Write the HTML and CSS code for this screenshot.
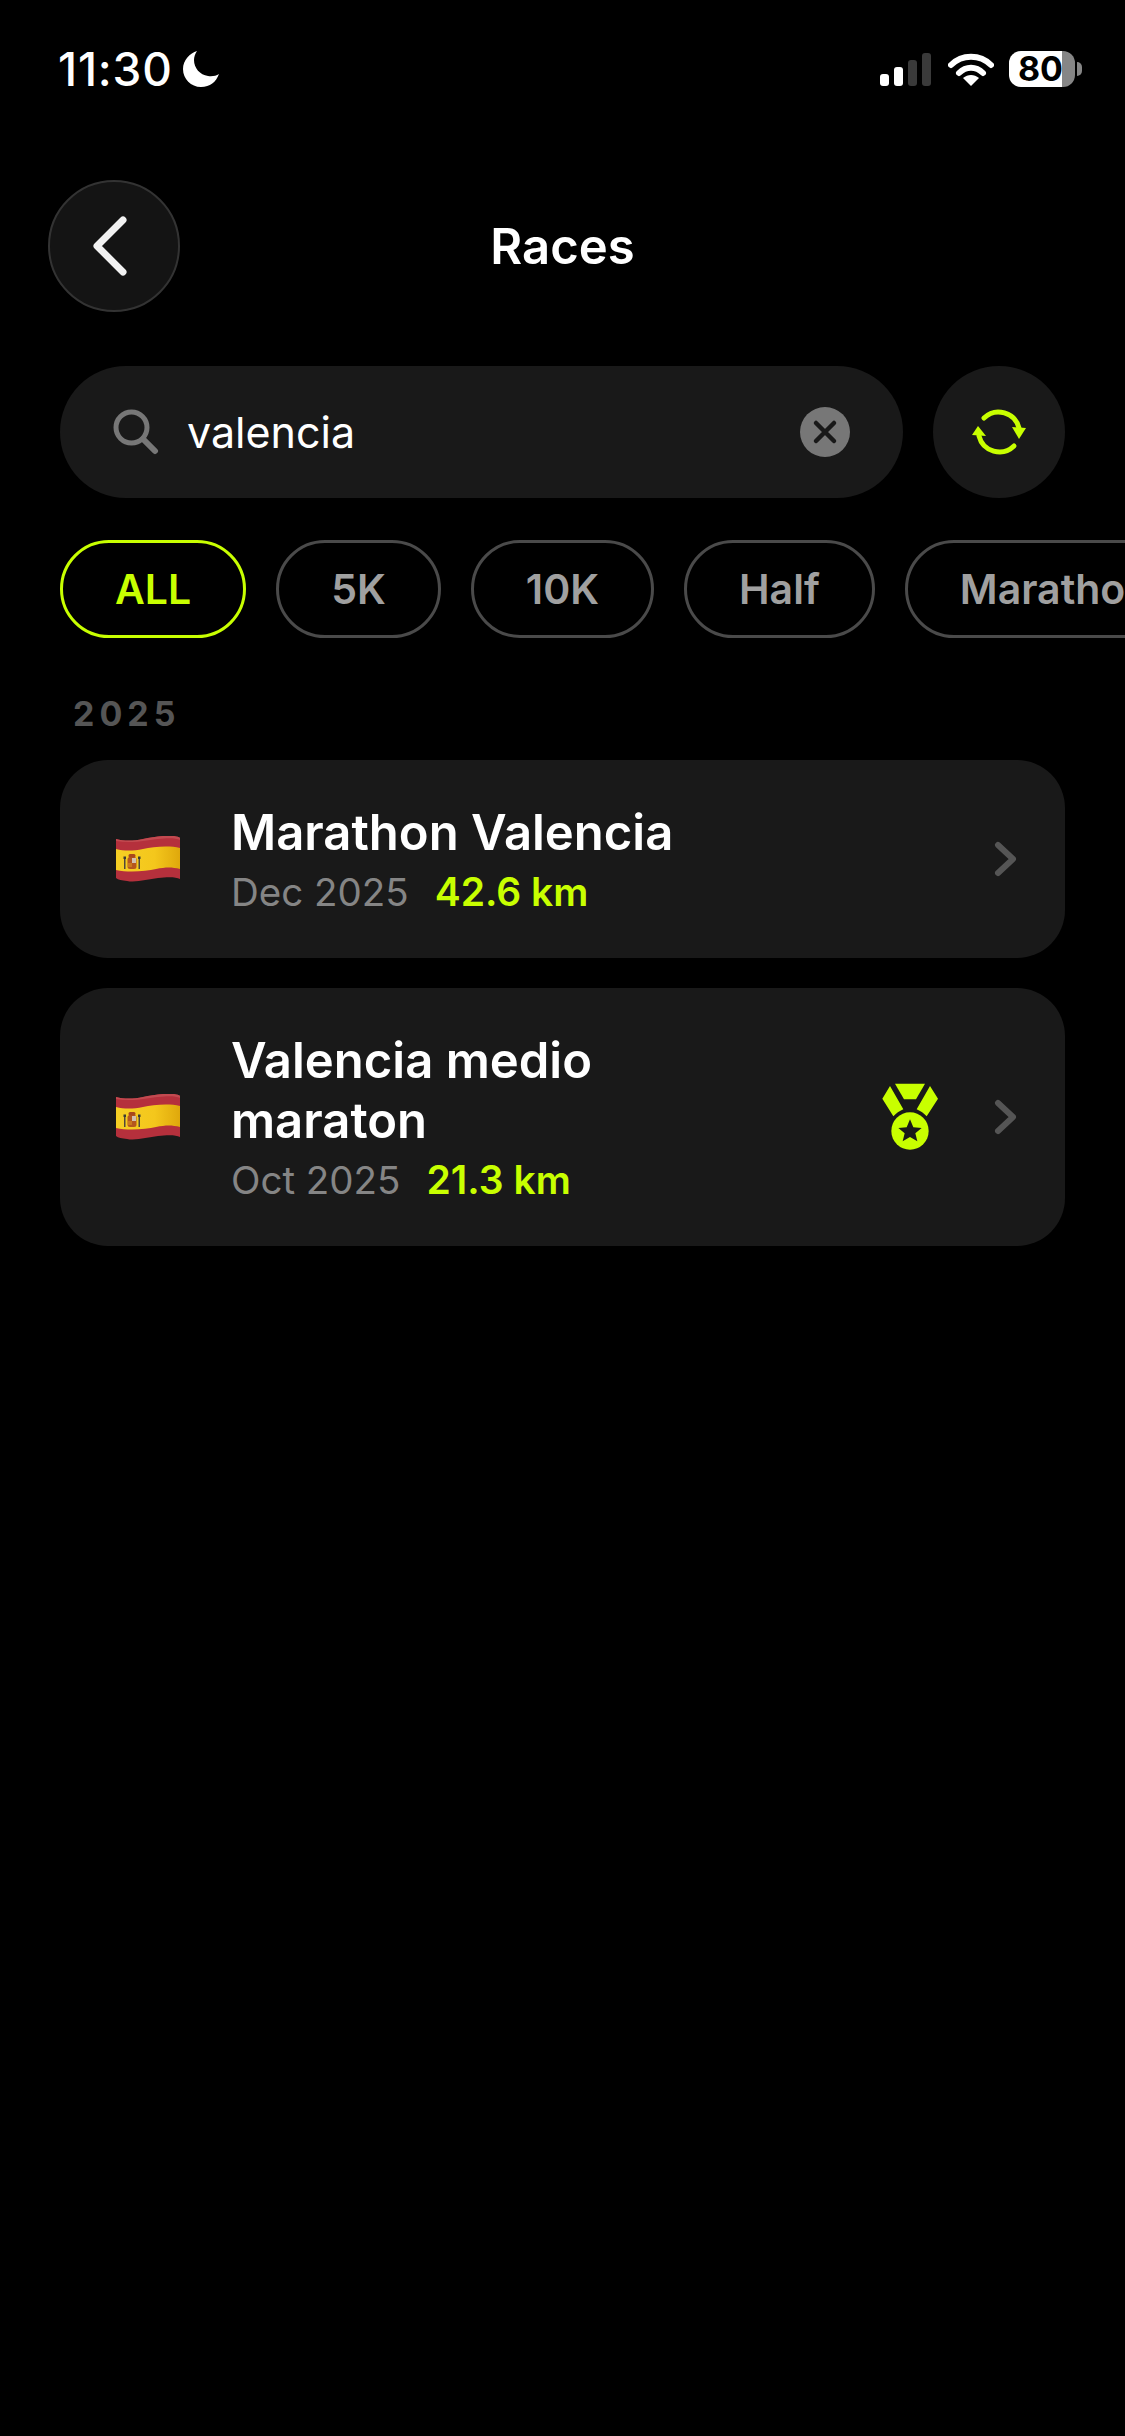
FILE: index.html
```html
<!DOCTYPE html>
<html lang="en">
<head>
    <meta charset="UTF-8">
    <meta name="viewport" content="width=device-width, initial-scale=1.0">
    <title>Races</title>
    <link rel="stylesheet" href="styles.css">
</head>
<body>
    <svg class="defs" width="0" height="0" aria-hidden="true">
        <defs>
            <linearGradient id="flag-shade" x1="0" y1="0" x2="1" y2="0">
                <stop offset="0" stop-color="#f6cf24"/>
                <stop offset="0.6" stop-color="#f4c71c"/>
                <stop offset="1" stop-color="#dfa80c"/>
            </linearGradient>
            <!-- Spanish flag, waving -->
            <symbol id="flag-es" viewBox="0 0 64 46">
                <path fill="#b5303c" d="M0 3C8 5 17 5 27 3S50-1 58 0C61 .5 63 1 64 2V43C60 41 52 41 42 42S20 47 11 45C6 44.500 2 44 0 42Z"/>
                <path fill="#c24a50" d="M0 3C8 5 17 5 27 3S50-1 58 0C61 .5 63 1 64 2V4C60 2 52 2 42 3S16 8 0 5Z"/>
                <path fill="url(#flag-shade)" d="M0 13C8 15 17 15 27 13S52 9 64 12V33C56 31 50 31 40 33S14 37 0 34Z"/>
                <rect x="11.500" y="21" width="9" height="12" rx="2.500" fill="#b5561e"/>
                <rect x="12.500" y="18" width="7" height="3.500" rx="1.500" fill="#a8481c"/>
                <rect x="16" y="22" width="4" height="5" fill="#d0c0b0"/>
                <rect x="12" y="27" width="4" height="4" fill="#c9781e"/>
                <rect x="8" y="22" width="1.500" height="11" fill="#50483c"/>
                <rect x="22.500" y="22" width="1.500" height="11" fill="#50483c"/>
                <rect x="7.500" y="20.500" width="2.500" height="2.500" fill="#3a3a34"/>
                <rect x="22" y="20.500" width="2.500" height="2.500" fill="#3a3a34"/>
            </symbol>
            <symbol id="chevron" viewBox="0 0 24 38">
                <path d="M4 5L19 19L4 33" fill="none" stroke="#555" stroke-width="6" stroke-linecap="round" stroke-linejoin="round"/>
            </symbol>
        </defs>
    </svg>

    <div class="status">
        <div class="status-left">
            <span class="time">11:30</span>
            <svg class="moon" width="36" height="36" viewBox="0 0 36 36">
                <path fill="#fff" d="M14 0C7 2 0 9 0 18C0 28 8 36 18 36C27 36 33 31 36 23C33 25 29 25.500 25 25C17 24 11 17 11 9C11 6 12 3 14 0Z"/>
            </svg>
        </div>
        <div class="status-right">
            <svg width="52" height="33" viewBox="0 0 52 33">
                <rect x="0" y="21" width="9" height="12" rx="3" fill="#fff"/>
                <rect x="14" y="14" width="9" height="19" rx="3" fill="#fff"/>
                <rect x="28" y="7" width="9" height="26" rx="3" fill="#3a3a3a"/>
                <rect x="42" y="0" width="9" height="33" rx="3" fill="#3a3a3a"/>
            </svg>
            <svg class="wifi" width="46" height="33" viewBox="0 0 46 33">
                <path d="M3 12C14 1 32 1 43 12" fill="none" stroke="#fff" stroke-width="6" stroke-linecap="round"/>
                <path d="M11 20C18 13 28 13 35 20" fill="none" stroke="#fff" stroke-width="6" stroke-linecap="round"/>
                <path fill="#fff" d="M15 25C20 21 26 21 31 25L23 33Z"/>
            </svg>
            <div class="battery"><span>80</span></div>
            <div class="battery-nub"></div>
        </div>
    </div>

    <header class="topbar">
        <button class="back" aria-label="Back">
            <svg width="36" height="60" viewBox="0 0 36 60">
                <path d="M31 4L5 30L31 56" fill="none" stroke="#f2f2f2" stroke-width="7" stroke-linecap="round" stroke-linejoin="round"/>
            </svg>
        </button>
        <h1>Races</h1>
    </header>

    <div class="search-row">
        <div class="search">
            <svg class="search-icon" width="46" height="46" viewBox="0 0 46 46">
                <circle cx="18.500" cy="18.500" r="15.500" fill="none" stroke="#777" stroke-width="5"/>
                <path d="M30 30L42 42" stroke="#777" stroke-width="6" stroke-linecap="round"/>
            </svg>
            <span class="search-text">valencia</span>
            <svg class="clear" width="50" height="50" viewBox="0 0 50 50">
                <circle cx="25" cy="25" r="25" fill="#777"/>
                <path d="M16 16L34 34M34 16L16 34" stroke="#191919" stroke-width="4.500" stroke-linecap="round"/>
            </svg>
        </div>
        <button class="refresh" aria-label="Refresh">
            <svg width="60" height="60" viewBox="-30 -30 60 60">
                <path d="M-15 -14A21 21 0 0 1 20 -4" fill="none" stroke="#c8ff00" stroke-width="5" stroke-linecap="round"/>
                <path d="M15 14A21 21 0 0 1 -20 4" fill="none" stroke="#c8ff00" stroke-width="5" stroke-linecap="round"/>
                <path fill="#c8ff00" d="M13 -5L27 -4L20 7Z"/>
                <path fill="#c8ff00" d="M-27 3L-21 -6L-13 4Z"/>
            </svg>
        </button>
    </div>

    <div class="chips">
        <span class="chip active">ALL</span>
        <span class="chip">5K</span>
        <span class="chip">10K</span>
        <span class="chip">Half</span>
        <span class="chip">Marathon</span>
    </div>

    <div class="year">2025</div>

    <div class="races">
        <div class="race">
            <svg class="flag" width="64" height="46"><use href="#flag-es"/></svg>
            <div class="race-info">
                <div class="race-name">Marathon Valencia</div>
                <div class="race-meta">
                    <span class="race-date">Dec 2025</span>
                    <span class="race-km">42.6 km</span>
                </div>
            </div>
            <svg class="chevron" width="24" height="38"><use href="#chevron"/></svg>
        </div>
        <div class="race">
            <svg class="flag" width="64" height="46"><use href="#flag-es"/></svg>
            <div class="race-info">
                <div class="race-name">Valencia medio maraton</div>
                <div class="race-meta">
                    <span class="race-date">Oct 2025</span>
                    <span class="race-km">21.3 km</span>
                </div>
            </div>
            <svg class="medal" width="60" height="70" viewBox="120 100 180 210">
                <path fill="#c8ff00" d="M165 105H255L228 152H192Z"/>
                <path fill="#c8ff00" d="M150 112L190 182C178 187 168 194 160 203L127 150Z"/>
                <path fill="#c8ff00" d="M270 112L230 182C242 187 252 194 260 203L294 150Z"/>
                <circle cx="210" cy="247" r="56" fill="#c8ff00"/>
                <path fill="#191919" d="M210 212L220 236L245 238L226 254L232 278L210 265L188 278L194 254L175 238L200 236Z"/>
            </svg>
            <svg class="chevron" width="24" height="38"><use href="#chevron"/></svg>
        </div>
    </div>
</body>
</html>
```

FILE: styles.css
```css
* {
    box-sizing: border-box;
}
body {
    margin: 0;
    min-height: 2436px;
    background: #000;
    color: #fff;
    font-family: Inter, "Noto Sans", sans-serif;
    overflow-x: hidden;
}
button {
    padding: 0;
    border: none;
    cursor: pointer;
}
.defs {
    display: block;
    height: 0;
}

/* status bar */
.status {
    display: flex;
    justify-content: space-between;
    align-items: center;
    height: 138px;
    padding: 0 43px 0 58px;
}
.status-left {
    display: flex;
    align-items: center;
    gap: 10px;
}
.time {
    font-size: 46px;
    font-weight: 500;
    line-height: 1;
    letter-spacing: 0.8px;
}
.status-right {
    display: flex;
    align-items: center;
}
.wifi {
    margin-left: 16px;
}
.battery {
    display: flex;
    justify-content: flex-end;
    align-items: center;
    width: 66px;
    height: 36px;
    margin-left: 15px;
    padding-right: 12px;
    border-radius: 12px;
    background: linear-gradient(to right, #fff 80%, #868686 80%);
    color: #000;
    font-size: 34px;
    font-weight: 700;
    line-height: 1;
}
.battery-nub {
    width: 5px;
    height: 14px;
    margin-left: 2px;
    border-radius: 0 7px 7px 0;
    background: #868686;
}

/* header */
.topbar {
    display: grid;
    grid-template-columns: 132px 1fr 132px;
    align-items: center;
    margin-top: 42px;
    padding: 0 48px;
}
.back {
    display: flex;
    justify-content: center;
    align-items: center;
    width: 132px;
    height: 132px;
    padding-right: 8px;
    border: 2px solid #333;
    border-radius: 50%;
    background: #141414;
}
.topbar h1 {
    margin: 0;
    font-size: 49px;
    font-weight: 600;
    text-align: center;
}

/* search */
.search-row {
    display: flex;
    gap: 30px;
    margin-top: 54px;
    padding: 0 60px;
}
.search {
    flex: 1;
    display: flex;
    align-items: center;
    height: 132px;
    padding: 0 53px 0 53px;
    border-radius: 66px;
    background: #191919;
}
.search-text {
    flex: 1;
    margin-left: 28px;
    font-size: 43px;
}
.refresh {
    display: flex;
    justify-content: center;
    align-items: center;
    width: 132px;
    height: 132px;
    border-radius: 50%;
    background: #191919;
}

/* filter chips */
.chips {
    display: flex;
    gap: 30px;
    margin-top: 42px;
    padding-left: 60px;
    overflow: hidden;
}
.chip {
    flex-shrink: 0;
    display: flex;
    align-items: center;
    height: 98px;
    padding: 0 52px;
    border: 3px solid #4a4a4a;
    border-radius: 49px;
    color: #a0a0a0;
    font-size: 41px;
    font-weight: 600;
}
.chip.active {
    border-color: #c8ff00;
    color: #c8ff00;
}

.year {
    margin-top: 54px;
    padding-left: 73px;
    color: #555;
    font-size: 34px;
    font-weight: 700;
    line-height: 44px;
    letter-spacing: 5px;
}

/* race list */
.races {
    display: flex;
    flex-direction: column;
    gap: 30px;
    margin-top: 24px;
    padding: 0 60px;
}
.race {
    display: flex;
    align-items: center;
    padding: 43px 47px 43px 56px;
    border-radius: 48px;
    background: #191919;
}
.flag {
    flex-shrink: 0;
}
.race-info {
    flex: 1;
    margin-left: 51px;
}
.race-name {
    max-width: 500px;
    font-size: 49px;
    font-weight: 600;
    line-height: 60px;
}
.race-meta {
    display: flex;
    gap: 26px;
    margin-top: 6px;
    font-size: 38.5px;
    line-height: 46px;
}
.race-date {
    color: #858585;
}
.race-km {
    color: #c8ff00;
    font-size: 39px;
    font-weight: 600;
}
.medal {
    flex-shrink: 0;
    margin-right: 54px;
}
.chevron {
    flex-shrink: 0;
}
```
